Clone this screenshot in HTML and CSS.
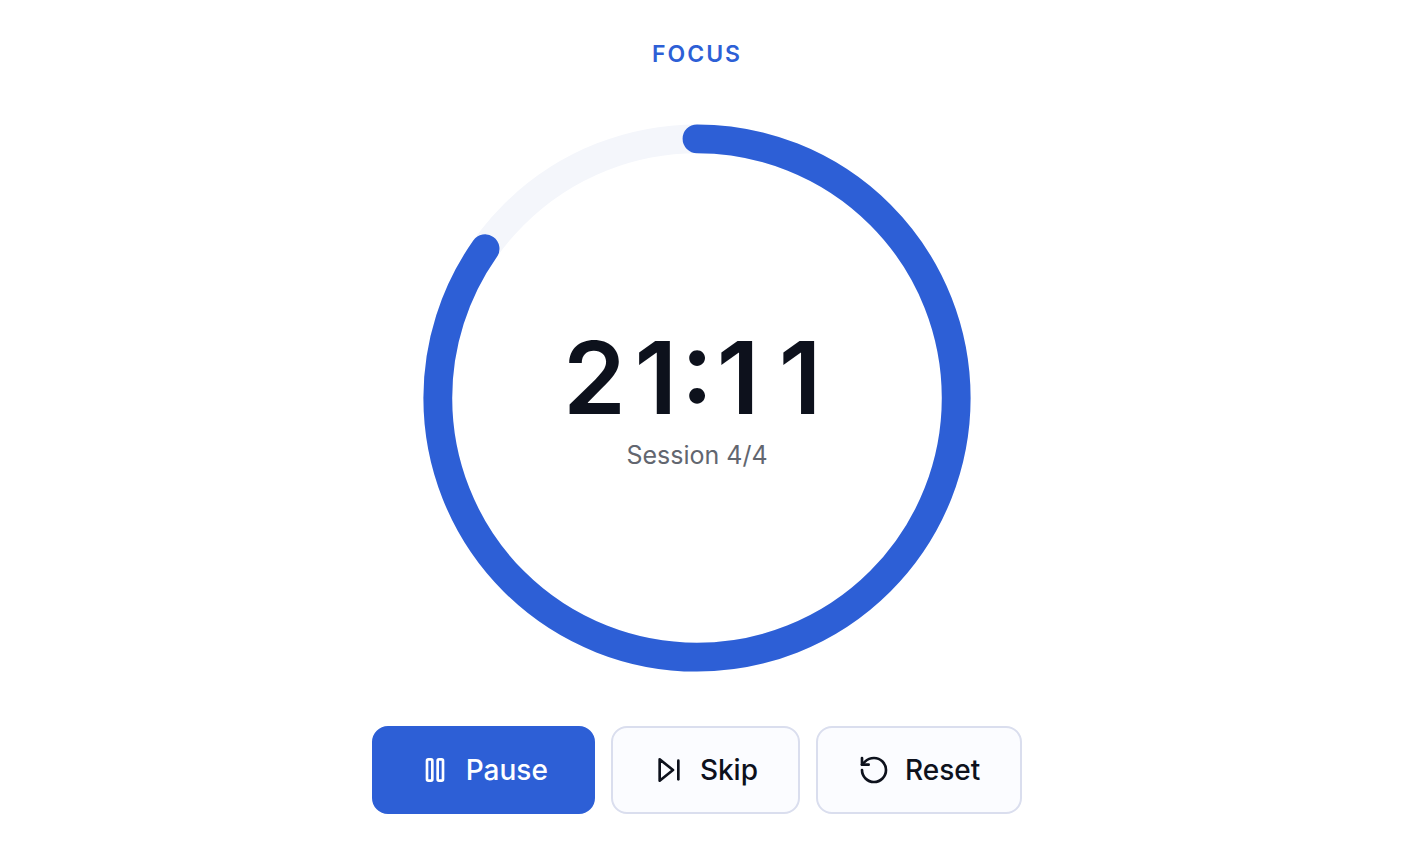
FILE: index.html
```html
<!DOCTYPE html>
<html lang="en">
<head>
  <meta charset="UTF-8" />
  <title>Focus Timer</title>
  <meta name="viewport" content="width=device-width, initial-scale=1" />
  <link rel="stylesheet" href="styles.css">
</head>
<body>
  <main class="timer">
    <h1 class="timer-mode">FOCUS</h1>

    <div class="timer-ring">
      <svg class="ring" viewBox="0 0 200 200" aria-hidden="true">
        <circle class="ring-track" cx="100" cy="100" r="90" />
        <circle class="ring-progress" cx="100" cy="100" r="90" pathLength="1500" stroke-dasharray="1273 1500" transform="rotate(-90 100 100)" />
      </svg>
      <div class="timer-display">
        <div class="timer-time" role="timer"><span class="digit">2</span><span class="digit">1</span><span class="colon">:</span><span class="digit">1</span><span class="digit">1</span></div>
        <div class="timer-session">Session 4/4</div>
      </div>
    </div>

    <div class="timer-controls">
      <button type="button" class="btn btn-primary">
        <svg class="icon" viewBox="0 0 24 24" aria-hidden="true">
          <rect x="6" y="4" width="4" height="16" rx="1" />
          <rect x="14" y="4" width="4" height="16" rx="1" />
        </svg>
        Pause
      </button>
      <button type="button" class="btn btn-secondary">
        <svg class="icon" viewBox="0 0 24 24" aria-hidden="true">
          <polygon points="5 4 15 12 5 20 5 4" />
          <line x1="19" y1="5" x2="19" y2="19" />
        </svg>
        Skip
      </button>
      <button type="button" class="btn btn-secondary">
        <svg class="icon" viewBox="0 0 24 24" aria-hidden="true">
          <path d="M3 12a9 9 0 1 0 9-9 9.75 9.75 0 0 0-6.74 2.74L3 8" />
          <path d="M3 3v5h5" />
        </svg>
        Reset
      </button>
    </div>
  </main>
</body>
</html>
```
FILE: styles.css
```css
:root {
  --primary: #2d5fd6;
  --track: #f4f6fb;
  --surface: #fbfcff;
  --border: #dadeee;
  --text: #0d111c;
  --muted: #62666f;
}

* {
  box-sizing: border-box;
}

body {
  margin: 0;
  padding-right: 20px;
  background: #fff;
  color: var(--text);
  font-family: Inter, "Liberation Sans", sans-serif;
}

.timer {
  display: flex;
  flex-direction: column;
  align-items: center;
  gap: 40px;
  padding: 38px 0;
}

.timer-mode {
  margin: 0;
  color: var(--primary);
  font-size: 23px;
  font-weight: 600;
  line-height: 32px;
  letter-spacing: 2px;
}

.timer-ring {
  display: grid;
  place-items: center;
  width: 100%;
  max-width: 576px;
}

.ring,
.timer-display {
  grid-area: 1 / 1;
}

.ring {
  display: block;
  width: 100%;
}

.ring circle {
  fill: none;
  stroke-width: 10;
}

.ring-track {
  stroke: var(--track);
}

.ring .ring-progress {
  stroke: var(--primary);
  stroke-linecap: round;
}

.timer-display {
  text-align: center;
}

.timer-time {
  font-size: 101px;
  font-weight: 600;
  line-height: 103px;
}

.digit {
  display: inline-block;
  width: 62px;
}

.colon {
  margin: 0 -6px;
  font-feature-settings: "case";
}

.timer-session {
  margin-top: 10px;
  color: var(--muted);
  font-size: 25px;
  line-height: 32px;
}

.timer-controls {
  display: flex;
  flex-wrap: wrap;
  justify-content: center;
  gap: 16px;
}

.btn {
  display: inline-flex;
  align-items: center;
  justify-content: center;
  gap: 15px;
  height: 88px;
  padding: 0 40px;
  border: 2px solid var(--border);
  border-radius: 16px;
  font-family: inherit;
  font-size: 28px;
  font-weight: 500;
  cursor: pointer;
}

.btn-primary {
  padding: 0 45px;
  border-color: var(--primary);
  background: var(--primary);
  color: #fff;
}

.btn-secondary {
  background: var(--surface);
  color: var(--text);
}

.icon {
  width: 32px;
  height: 32px;
  fill: none;
  stroke: currentColor;
  stroke-width: 2;
  stroke-linecap: round;
  stroke-linejoin: round;
}
```
